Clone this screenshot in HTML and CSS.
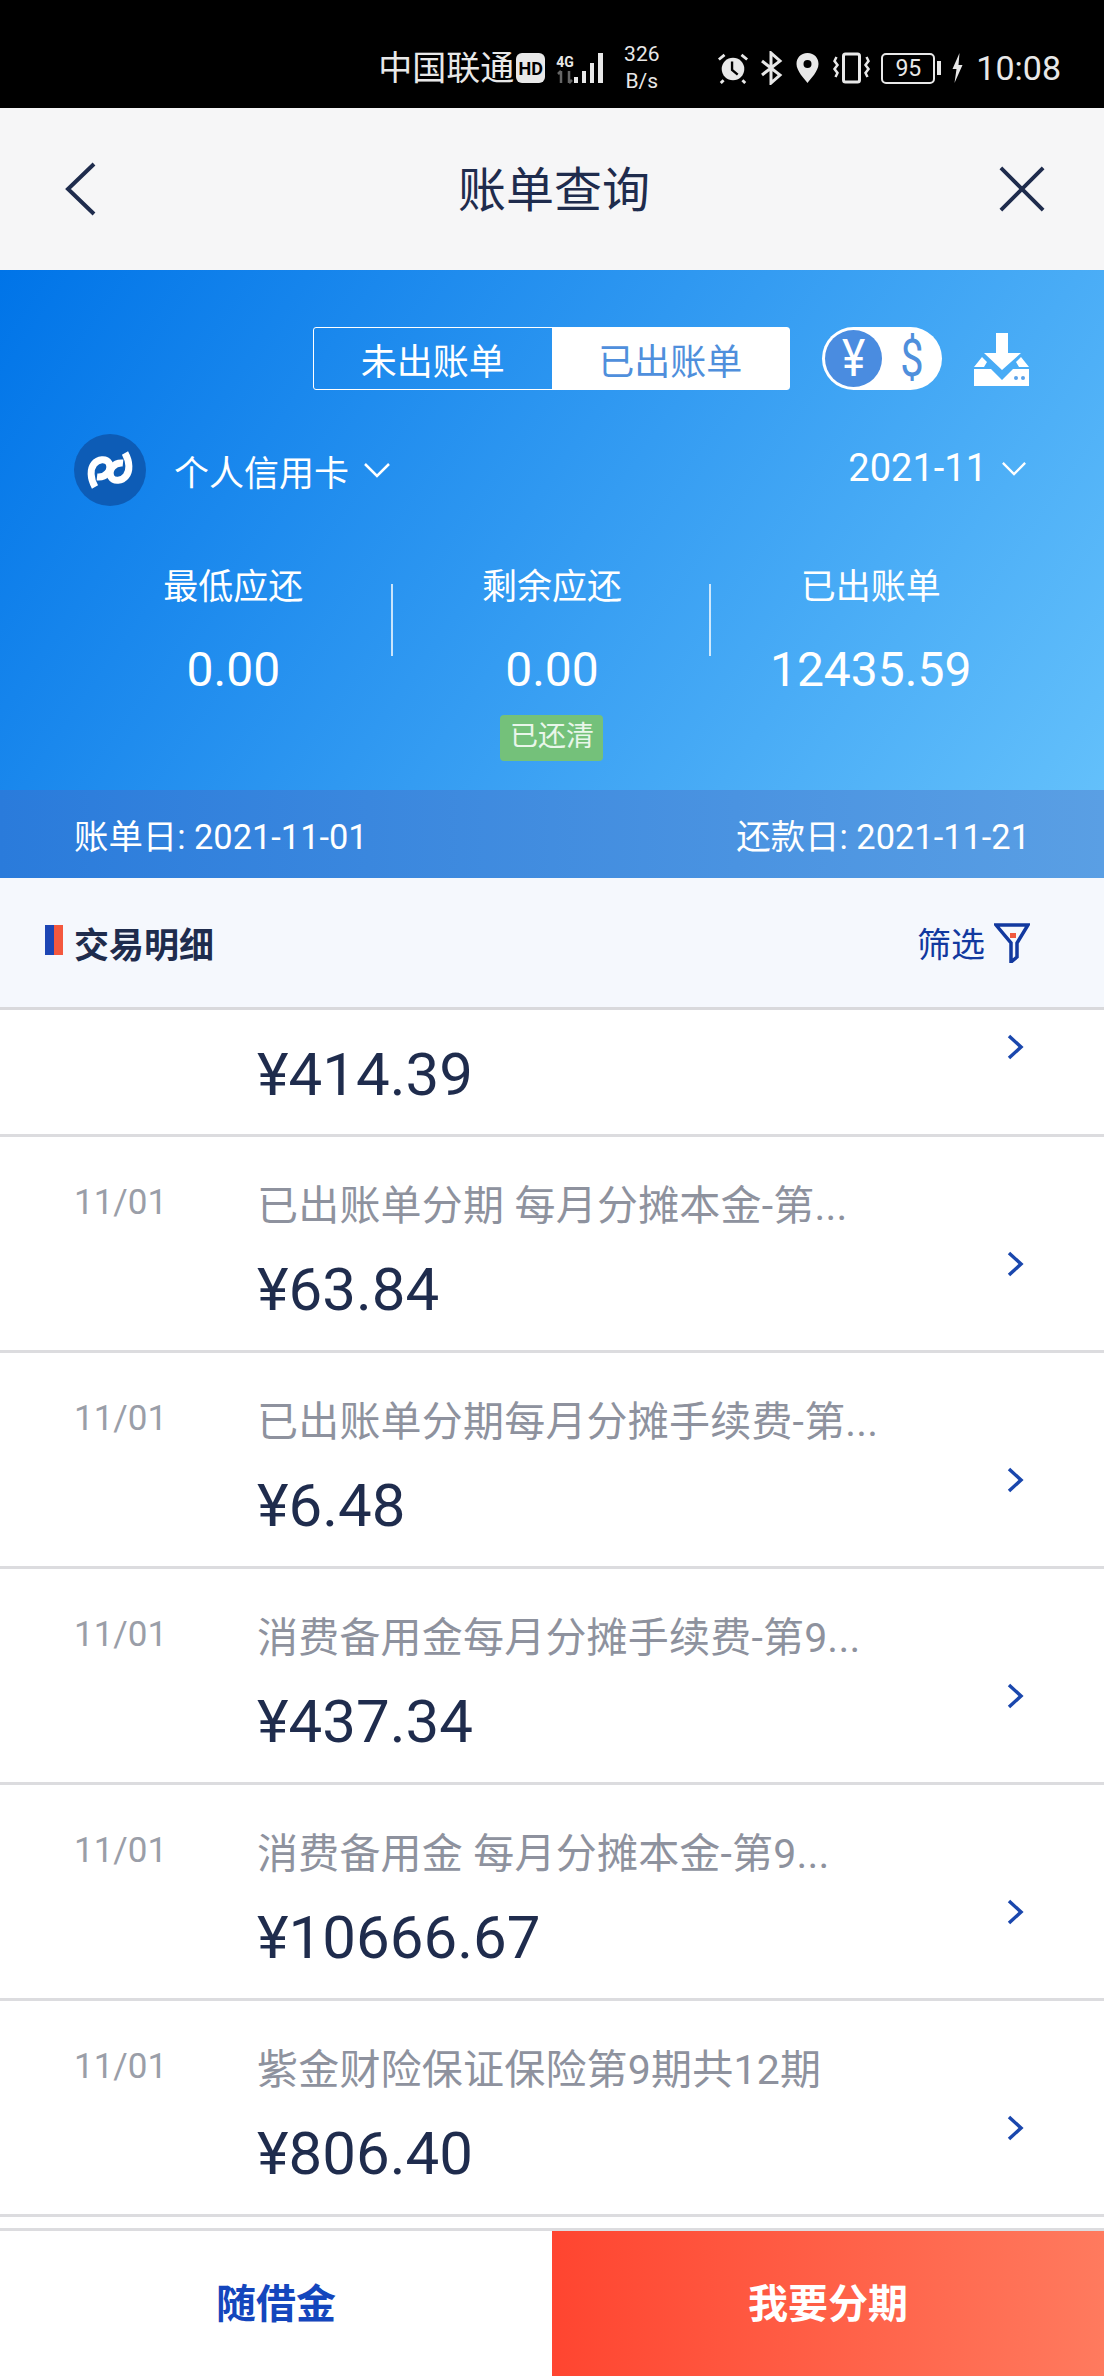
FILE: index.html
```html
<!DOCTYPE html>
<html lang="zh-CN">
<head>
  <meta charset="UTF-8" />
  <meta name="viewport" content="width=device-width, initial-scale=1.0"/>
  <title>账单查询</title>
  <link rel="stylesheet" href="styles.css">
</head>
<body>

  <!-- 状态栏 -->
  <div class="status-bar">
    <span class="carrier">中国联通</span>
    <span class="hd">HD</span>
    <div class="signal">
      <div class="net">
        <span>4G</span>
        <svg width="18" height="14" viewBox="0 0 18 14"><path d="M5 1v12M2 4l3-3M13 1v12M16 10l-3 3" fill="none" stroke="#666" stroke-width="2.5"/></svg>
      </div>
      <svg width="31" height="32" viewBox="0 0 31 32"><g fill="#e8e8e8"><rect x="0" y="25" width="4" height="6"/><rect x="8" y="19" width="4" height="12"/><rect x="16" y="11" width="4" height="20"/><rect x="24" y="1" width="5" height="30"/></g></svg>
    </div>
    <div class="speed"><span>326</span><span>B/s</span></div>
    <svg class="ic-alarm" width="32" height="32" viewBox="0 0 34 34"><circle cx="17" cy="18" r="12" fill="#e8e8e8"/><path d="M16 10v9l6 5" fill="none" stroke="#000" stroke-width="2.5"/><path d="M2 8l6-5M32 8l-6-5M7 30l-3 3M27 30l3 3" stroke="#e8e8e8" stroke-width="3"/></svg>
    <svg class="ic-bt" width="24" height="34" viewBox="0 0 22 34"><path d="M2 10l18 14-9 8V2l9 8L2 24" fill="none" stroke="#e8e8e8" stroke-width="3"/></svg>
    <svg class="ic-pin" width="25" height="32" viewBox="0 0 24 32"><path d="M12 1C5 1 1 6 1 12c0 7 8 15 11 19 3-4 11-12 11-19C23 6 19 1 12 1z" fill="#e8e8e8"/><circle cx="12" cy="12" r="4" fill="#000"/></svg>
    <svg class="ic-vibe" width="39" height="32" viewBox="0 0 38 32"><rect x="11" y="2" width="16" height="28" rx="2" fill="none" stroke="#e8e8e8" stroke-width="3"/><path d="M4 5l-2 4 3 4-3 4 3 4-2 4M34 5l2 4-3 4 3 4-3 4 2 4" fill="none" stroke="#e8e8e8" stroke-width="2.5"/></svg>
    <span class="battery-level">95</span>
    <i class="battery-tip"></i>
    <svg class="ic-bolt" width="17" height="32" viewBox="0 0 14 32"><path d="M9 1L2 17h4l-2 14 8-18H8z" fill="#e8e8e8"/></svg>
    <span class="clock">10:08</span>
  </div>

  <!-- 标题栏 -->
  <div class="nav-bar">
    <svg width="36" height="56" viewBox="0 0 36 56"><path d="M32 3L6 28l26 25" fill="none" stroke="#1f2c4d" stroke-width="4"/></svg>
    <h1>账单查询</h1>
    <svg class="nav-close" width="48" height="48" viewBox="0 0 50 50"><path d="M3 3l44 44M47 3L3 47" fill="none" stroke="#1f2c4d" stroke-width="4"/></svg>
  </div>

  <!-- 账单概览 -->
  <div class="summary">
    <div class="summary-top">
      <div class="tabs">
        <div class="tab">未出账单</div>
        <div class="tab active">已出账单</div>
      </div>
      <div class="currency">
        <span class="currency-on"><span>¥</span></span>
        <span class="currency-off">$</span>
      </div>
      <svg width="57" height="56" viewBox="0 0 57 56"><path d="M23 2h12v20h13L29 39 11 22h12z" fill="#fff"/><path d="M1 55V38h17l11 11 11-11h16v17z" fill="#fff"/><path d="M1 36l8-10 5 5-3 5zM56 36l-8-10-5 5 3 5z" fill="#fff"/><circle cx="43" cy="47" r="2" fill="#5aa2ea"/><circle cx="50" cy="47" r="2" fill="#5aa2ea"/></svg>
    </div>

    <div class="card-row">
      <div class="card-name">
        <svg class="bank-logo" width="72" height="72" viewBox="0 0 72 72"><circle cx="36" cy="36" r="36" fill="#0d5cb6"/><g fill="none" stroke="#fff" stroke-width="7"><path d="M21 53C16 44 16 35 20 30c4-5 12-6 15-1 3 7-3 15-12 14"/><path d="M51 19c5 9 5 18 1 23-4 5-12 6-15 1-3-7 3-15 12-14"/></g></svg>
        <span>个人信用卡</span>
        <svg class="caret" width="28" height="16" viewBox="0 0 28 16"><path d="M2 2l12 12L26 2" fill="none" stroke="#fff" stroke-width="2.5"/></svg>
      </div>
      <div class="card-month">
        <span>2021-11</span>
        <svg class="caret" width="26" height="15" viewBox="0 0 28 16"><path d="M2 2l12 12L26 2" fill="none" stroke="#fff" stroke-width="2.5"/></svg>
      </div>
    </div>

    <div class="stats">
      <div class="stat">
        <p class="stat-label">最低应还</p>
        <p class="stat-value">0.00</p>
      </div>
      <div class="stat">
        <p class="stat-label">剩余应还</p>
        <p class="stat-value">0.00</p>
        <span class="paid">已还清</span>
      </div>
      <div class="stat">
        <p class="stat-label">已出账单</p>
        <p class="stat-value">12435.59</p>
      </div>
    </div>
  </div>

  <div class="dates">
    <span>账单日: 2021-11-01</span>
    <span>还款日: 2021-11-21</span>
  </div>

  <!-- 交易明细 -->
  <div class="detail-head">
    <div class="detail-title"><i class="mark"></i>交易明细</div>
    <div class="filter">
      <span>筛选</span>
      <svg width="36" height="40" viewBox="0 0 36 40"><path d="M2 2h32L23 20v14l-6 5V20z" fill="none" stroke="#12399f" stroke-width="3.5"/><rect x="16" y="10" width="6" height="5" fill="#f0593e"/></svg>
    </div>
  </div>

  <div class="list">
    <div class="row row-cut">
      <div class="row-main"><p class="amount">¥414.39</p></div>
      <svg class="arrow" width="18" height="28" viewBox="0 0 18 28"><path d="M3 3l12 11L3 25" fill="none" stroke="#1a47ad" stroke-width="3.5"/></svg>
    </div>
    <div class="row">
      <span class="date">11/01</span>
      <div class="row-main"><p class="title">已出账单分期 每月分摊本金-第...</p><p class="amount">¥63.84</p></div>
      <svg class="arrow" width="18" height="28" viewBox="0 0 18 28"><path d="M3 3l12 11L3 25" fill="none" stroke="#1a47ad" stroke-width="3.5"/></svg>
    </div>
    <div class="row">
      <span class="date">11/01</span>
      <div class="row-main"><p class="title">已出账单分期每月分摊手续费-第...</p><p class="amount">¥6.48</p></div>
      <svg class="arrow" width="18" height="28" viewBox="0 0 18 28"><path d="M3 3l12 11L3 25" fill="none" stroke="#1a47ad" stroke-width="3.5"/></svg>
    </div>
    <div class="row">
      <span class="date">11/01</span>
      <div class="row-main"><p class="title">消费备用金每月分摊手续费-第9...</p><p class="amount">¥437.34</p></div>
      <svg class="arrow" width="18" height="28" viewBox="0 0 18 28"><path d="M3 3l12 11L3 25" fill="none" stroke="#1a47ad" stroke-width="3.5"/></svg>
    </div>
    <div class="row">
      <span class="date">11/01</span>
      <div class="row-main"><p class="title">消费备用金 每月分摊本金-第9...</p><p class="amount">¥10666.67</p></div>
      <svg class="arrow" width="18" height="28" viewBox="0 0 18 28"><path d="M3 3l12 11L3 25" fill="none" stroke="#1a47ad" stroke-width="3.5"/></svg>
    </div>
    <div class="row">
      <span class="date">11/01</span>
      <div class="row-main"><p class="title">紫金财险保证保险第9期共12期</p><p class="amount">¥806.40</p></div>
      <svg class="arrow" width="18" height="28" viewBox="0 0 18 28"><path d="M3 3l12 11L3 25" fill="none" stroke="#1a47ad" stroke-width="3.5"/></svg>
    </div>
  </div>

  <div class="footer">
    <div class="foot-btn foot-loan">随借金</div>
    <div class="foot-btn foot-split">我要分期</div>
  </div>

</body>
</html>
```

FILE: styles.css
```css
* {
  box-sizing: border-box;
}

body {
  margin: 0;
  height: 2376px;
  display: flex;
  flex-direction: column;
  overflow: hidden;
  background-color: #fff;
  font-family: Roboto, "Noto Sans CJK SC", sans-serif;
}

p, h1 {
  margin: 0;
  font-weight: 400;
}

/* status bar */
.status-bar {
  height: 108px;
  flex: none;
  background-color: #000;
  color: #e8e8e8;
  display: flex;
  align-items: center;
  justify-content: flex-end;
  padding: 28px 43px 0 0;
}

.carrier {
  font-size: 34px;
  line-height: 1;
}

.hd {
  margin-left: 2px;
  background-color: #e8e8e8;
  color: #000;
  font-size: 18px;
  font-weight: 700;
  width: 29px;
  height: 30px;
  border-radius: 6px;
  display: flex;
  align-items: center;
  justify-content: center;
}

.signal {
  display: flex;
  align-items: flex-end;
  margin-left: 11px;
}

.net {
  width: 18px;
  display: flex;
  flex-direction: column;
  font-size: 14px;
  font-weight: 700;
  line-height: 15px;
}

.speed {
  display: flex;
  flex-direction: column;
  align-items: center;
  width: 39px;
  font-size: 21px;
  line-height: 27px;
  margin-left: 17px;
}

.ic-alarm {
  margin-left: 56px;
}

.ic-bt {
  margin-left: 10px;
}

.ic-pin {
  margin-left: 12px;
}

.ic-vibe {
  margin-left: 12px;
}

.battery-level {
  margin-left: 10px;
  width: 54px;
  height: 31px;
  border: 2px solid #e8e8e8;
  border-radius: 5px;
  font-size: 23px;
  line-height: 27px;
  text-align: center;
}

.battery-tip {
  margin-left: 2px;
  width: 4px;
  height: 14px;
  background-color: #e8e8e8;
}

.ic-bolt {
  margin-left: 8px;
}

.clock {
  font-size: 34px;
  line-height: 1;
  margin-left: 10px;
}

/* nav */
.nav-bar {
  height: 162px;
  flex: none;
  background-color: #f6f6f7;
  display: grid;
  grid-template-columns: 1fr auto 1fr;
  align-items: center;
  padding: 0 58px 0 62px;
  color: #1f2c4d;
}

.nav-bar h1 {
  font-size: 48px;
  margin-top: -6px;
}

.nav-close {
  justify-self: end;
}

/* blue block */
.summary {
  height: 520px;
  flex: none;
  padding: 57px 74px 0;
  color: #fff;
  background: linear-gradient(125deg, #0074e8 0%, #63c0fb 100%);
}

.summary-top {
  display: flex;
  justify-content: flex-end;
  align-items: center;
  height: 63px;
}

.tabs {
  display: flex;
  width: 477px;
  height: 63px;
  border: 1.5px solid #fff;
  border-radius: 3px;
  margin-right: 32px;
}

.tab {
  flex: 1;
  font-size: 36px;
  display: flex;
  align-items: center;
  justify-content: center;
}

.tab.active {
  background-color: #fff;
  color: #4f8fdc;
}

.currency {
  width: 120px;
  height: 63px;
  margin-right: 31px;
  border-radius: 32px;
  background-color: #fff;
  display: flex;
  align-items: center;
  padding-left: 3px;
  color: #4f8fdc;
}

.currency-on {
  width: 57px;
  height: 57px;
  border-radius: 50%;
  background-color: #4a8ce0;
  color: #fff;
  font-size: 52px;
  line-height: 57px;
  display: flex;
  align-items: center;
  justify-content: center;
}

.currency-on span {
  transform: scaleX(0.85);
}

.currency-off {
  flex: 1;
  font-size: 52px;
  line-height: 57px;
  text-align: center;
  transform: scaleX(0.8);
}

.card-row {
  display: flex;
  justify-content: space-between;
  align-items: center;
  margin-top: 44px;
  height: 72px;
}

.card-name, .card-month {
  display: flex;
  align-items: center;
  font-size: 35px;
}

.bank-logo {
  margin-right: 28px;
}

.caret {
  margin-left: 14px;
}

.card-month {
  font-size: 38px;
  margin-top: -4px;
  padding-right: 3px;
}

.stats {
  display: grid;
  grid-template-columns: repeat(3, 1fr);
  margin-top: 60px;
  text-align: center;
}

.stat {
  display: flex;
  flex-direction: column;
  align-items: center;
  position: relative;
}

.stat + .stat::before {
  content: "";
  position: absolute;
  left: -2px;
  top: 18px;
  width: 2px;
  height: 72px;
  background-color: rgba(255, 255, 255, 0.75);
}

.stat-label {
  font-size: 35px;
  line-height: 44px;
}

.stat-value {
  font-size: 48px;
  line-height: 60px;
  margin-top: 30px;
}

.paid {
  margin-top: 15px;
  width: 103px;
  height: 46px;
  border-radius: 4px;
  background-color: #74c17a;
  color: #e9f6ea;
  font-size: 28px;
  line-height: 44px;
}

.dates {
  height: 88px;
  flex: none;
  padding: 0 74px;
  display: flex;
  align-items: center;
  justify-content: space-between;
  color: #fff;
  font-size: 34.4px;
  background: linear-gradient(90deg, #2a7bdb 0%, #5a9fe4 100%);
}

/* detail */
.detail-head {
  height: 132px;
  flex: none;
  padding: 0 74px 0 45px;
  display: flex;
  align-items: center;
  justify-content: space-between;
  background-color: #f5f8fd;
  border-bottom: 3px solid #d9d9dc;
}

.detail-title {
  display: flex;
  align-items: center;
  font-size: 35px;
  font-weight: 700;
  color: #1f2c4d;
}

.mark {
  width: 18px;
  height: 30px;
  margin-right: 11px;
  margin-top: -6px;
  background: linear-gradient(90deg, #1d46b4 50%, #f4583e 50%);
}

.filter {
  display: flex;
  align-items: center;
  gap: 9px;
  color: #12399f;
  font-size: 34px;
}

.list {
  flex: 1;
  overflow: hidden;
}

.row {
  height: 216px;
  display: flex;
  padding: 0 74px;
  border-bottom: 3px solid #dcdcdf;
  position: relative;
}

.row-cut {
  height: 127px;
}

.row-cut .arrow {
  top: 23px;
}

.date {
  width: 183px;
  flex: none;
  padding-top: 44px;
  font-size: 35px;
  line-height: 44px;
  color: #9a9ea8;
}

.row-main {
  padding-top: 45px;
}

.row-cut .row-main {
  padding-top: 0;
  margin-top: 4px;
  margin-left: 183px;
}

.title {
  font-size: 41px;
  line-height: 48px;
  letter-spacing: 0.2px;
  color: #8e929e;
  white-space: nowrap;
}

.amount {
  font-size: 60px;
  line-height: 70px;
  margin-top: 25px;
  color: #1f2c4d;
}

.row-cut .amount {
  margin-top: 26px;
}

.arrow {
  position: absolute;
  right: 80px;
  top: 113px;
}

.footer {
  height: 148px;
  flex: none;
  display: flex;
  border-top: 3px solid #dcdcdf;
  font-size: 40px;
  font-weight: 700;
}

.foot-btn {
  flex: 1;
  display: flex;
  align-items: center;
  justify-content: center;
  padding-bottom: 6px;
}

.foot-loan {
  color: #1446bd;
  background-color: #fff;
}

.foot-split {
  color: #fff;
  background: linear-gradient(90deg, #ff4530 0%, #ff7a5e 100%);
}
```
